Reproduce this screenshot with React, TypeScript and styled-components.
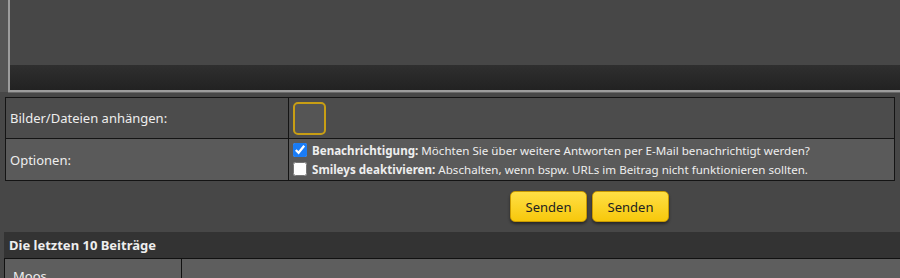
import { createGlobalStyle } from "styled-components";
import styled from "styled-components";

const GlobalStyle = createGlobalStyle`
  html, body {
    margin: 0;
    padding: 0;
    background: #474747;
    overflow: hidden;
  }
  body {
    font-family: "Noto Sans", "DejaVu Sans", sans-serif;
    color: #eeeeee;
  }
`

const Page = styled.div`
  width: 900px;
  display: flex;
  flex-direction: column;
`
const EditorFrame = styled.div`
  background: #555555;
  padding-left: 8px;
`
const Editor = styled.div`
  width: calc(100% + 10px);
  border-left: 2px solid #9c9c9c;
  border-bottom: 2px solid #9c9c9c;
  display: flex;
  flex-direction: column;
  box-shadow: 0 1px 0 #6a6a6a;
`
const EditorBody = styled.div`
  height: 65px;
  background: #474747;
`
const StatusBar = styled.div`
  height: 25px;
  background: linear-gradient(#2f2f2f, #222222);
`
const FormTable = styled.div`
  margin: 5px 5px 0 5px;
  border: 1px solid #141414;
  display: grid;
  grid-template-columns: 283px 1fr;
`
const Label = styled.div<{ $alt?: boolean; $h: number }>`
  height: ${p => p.$h}px;
  background: ${p => (p.$alt ? "#5a5a5a" : "#4c4c4c")};
  border-right: 1px solid #141414;
  border-top: ${p => (p.$alt ? "1px solid #141414" : "none")};
  display: flex;
  align-items: center;
  padding-left: 4px;
  font-size: 13px;
`
const Value = styled.div<{ $alt?: boolean; $h: number }>`
  height: ${p => p.$h}px;
  background: ${p => (p.$alt ? "#5a5a5a" : "#4c4c4c")};
  border-top: ${p => (p.$alt ? "1px solid #141414" : "none")};
  display: flex;
  flex-direction: column;
  justify-content: center;
  padding-left: 4px;
  gap: 2px;
`
const UploadBox = styled.div`
  width: 29px;
  height: 29px;
  border: 2px solid #c89e14;
  border-radius: 5px;
  background: #555555;
`
const Option = styled.label`
  display: flex;
  align-items: center;
  gap: 5px;
  font-size: 11.6px;
  line-height: 17px;
  b {
    font-weight: bold;
  }
`
const Check = styled.input`
  width: 14px;
  height: 14px;
  margin: 0;
  accent-color: #1a7cf5;
`
const ButtonRow = styled.div`
  height: 51px;
  display: grid;
  grid-template-columns: 281px 1fr;
  align-items: center;
`
const Buttons = styled.div`
  display: flex;
  justify-content: center;
  gap: 5px;
  padding-right: 2px;
`
const SendButton = styled.button`
  width: 77px;
  height: 31px;
  border: 1px solid #c99a00;
  border-radius: 5px;
  background: linear-gradient(#ffdf45, #f7c80c);
  color: #222222;
  font-family: "Noto Sans", "DejaVu Sans", sans-serif;
  font-size: 13px;
  box-shadow: 0 2px 3px rgba(0, 0, 0, 0.45);
  cursor: pointer;
`
const SectionHead = styled.div`
  margin-left: 4px;
  height: 26px;
  background: #333333;
  display: flex;
  align-items: center;
  padding-left: 5px;
  font-size: 13px;
  font-weight: bold;
  border-bottom: 1px solid #111111;
`
const PostRow = styled.div`
  margin-left: 4px;
  display: grid;
  grid-template-columns: 177px 1fr;
  border-left: 1px solid #111111;
  height: 30px;
`
const Author = styled.div`
  background: #5e5e5e;
  border-right: 1px solid #111111;
  padding: 8px 0 0 8px;
  font-size: 13px;
`
const PostCell = styled.div`
  background: #5e5e5e;
`

export default function App() {
  return (
    <Page>
      <GlobalStyle />
      <EditorFrame>
        <Editor>
          <EditorBody />
          <StatusBar />
        </Editor>
      </EditorFrame>
      <FormTable>
        <Label $h={40}>Bilder/Dateien anhängen:</Label>
        <Value $h={40}>
          <UploadBox />
        </Value>
        <Label $alt $h={41}>Optionen:</Label>
        <Value $alt $h={41}>
          <Option>
            <Check type="checkbox" defaultChecked />
            <span><b>Benachrichtigung:</b> Möchten Sie über weitere Antworten per E-Mail benachrichtigt werden?</span>
          </Option>
          <Option>
            <Check type="checkbox" />
            <span><b>Smileys deaktivieren:</b> Abschalten, wenn bspw. URLs im Beitrag nicht funktionieren sollten.</span>
          </Option>
        </Value>
      </FormTable>
      <ButtonRow>
        <div />
        <Buttons>
          <SendButton>Senden</SendButton>
          <SendButton>Senden</SendButton>
        </Buttons>
      </ButtonRow>
      <SectionHead>Die letzten 10 Beiträge</SectionHead>
      <PostRow>
        <Author>Moos</Author>
        <PostCell />
      </PostRow>
    </Page>
  );
}
